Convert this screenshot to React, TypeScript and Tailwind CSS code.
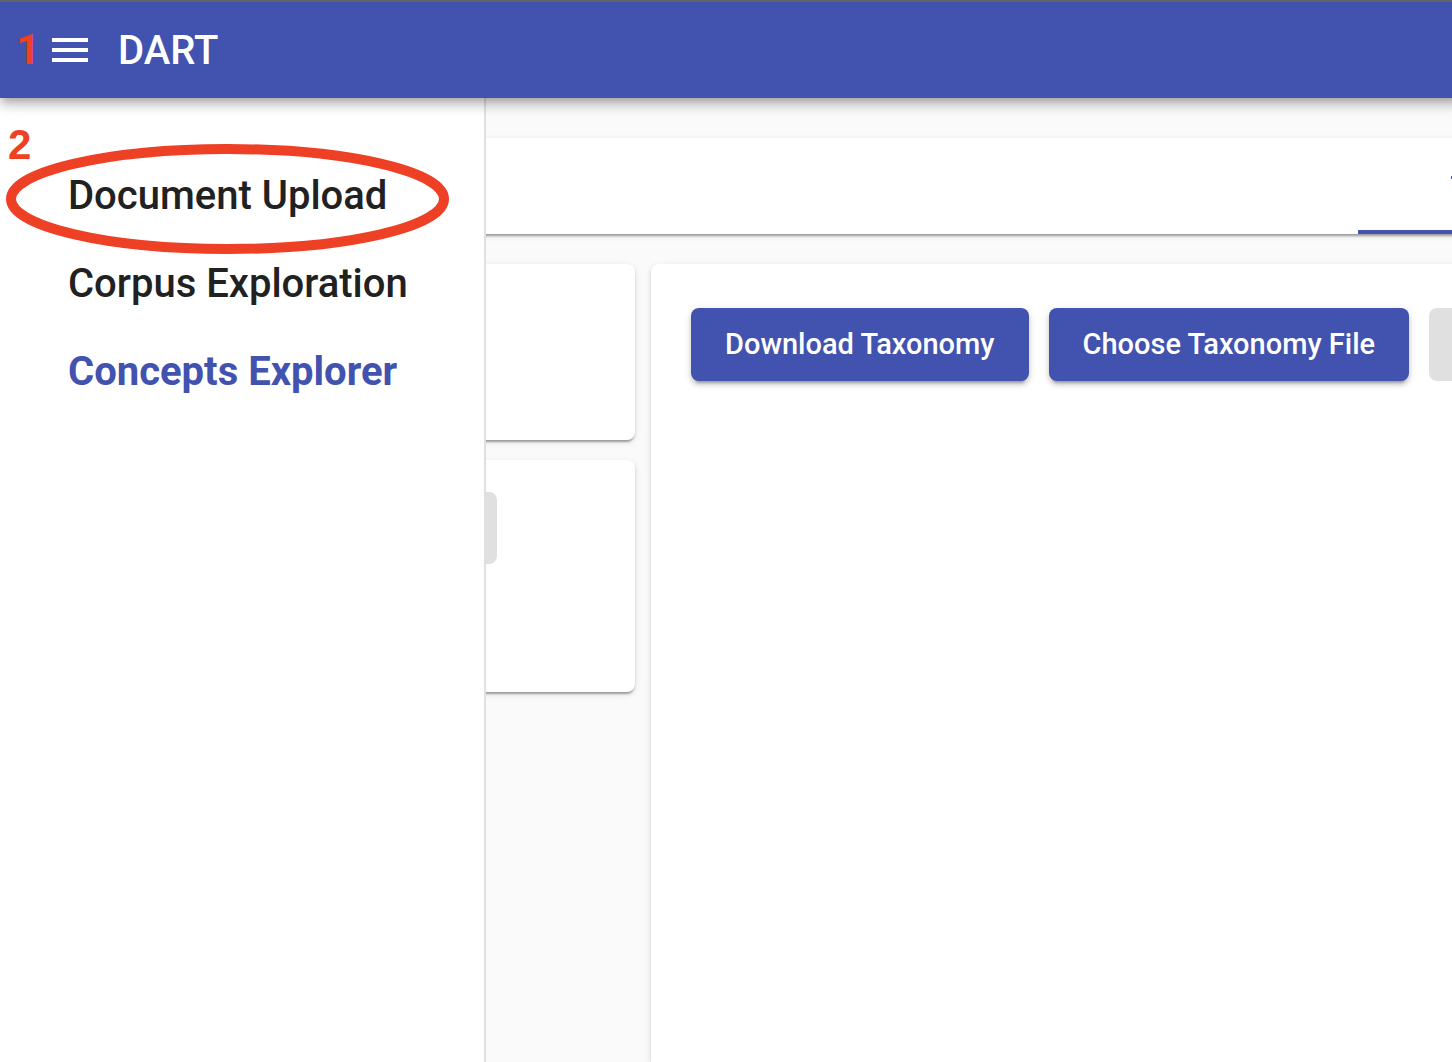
import React from "react";

const paper =
  "bg-white shadow-[0_4px_2px_-2px_rgba(0,0,0,0.2),0_2px_2px_0_rgba(0,0,0,0.14),0_2px_6px_0_rgba(0,0,0,0.12)]";

const containedButton =
  "h-[73px] shrink-0 cursor-pointer whitespace-nowrap rounded-lg bg-[#4152af] px-[34px] text-[29px] font-medium text-white shadow-[0_6px_2px_-4px_rgba(0,0,0,0.2),0_4px_4px_0_rgba(0,0,0,0.14),0_2px_10px_0_rgba(0,0,0,0.12)]";

function Header() {
  return (
    <header className="relative z-10 -mr-4 flex h-[98px] items-center border-t-2 border-[#636369] bg-[#4152af] pl-4 text-white shadow-[0_4px_8px_-2px_rgba(0,0,0,0.2),0_8px_10px_0_rgba(0,0,0,0.14),0_2px_20px_0_rgba(0,0,0,0.12)]">
      <span className="w-[30px] text-[42px] leading-none font-bold text-[#ed4025]">1</span>
      <button type="button" aria-label="Open menu" className="cursor-pointer">
        <svg viewBox="0 0 24 24" className="size-12" fill="currentColor" aria-hidden="true">
          <path d="M3 18h18v-2H3v2zm0-5h18v-2H3v2zm0-7v2h18V6H3z" />
        </svg>
      </button>
      <h1 className="ml-6 pt-0.5 text-[40px] leading-none font-medium">DART</h1>
    </header>
  );
}

function Sidebar() {
  return (
    <aside className="relative w-[486px] shrink-0 border-r-2 border-[#e0e0e0] bg-white pt-[54px]">
      <nav className="flex flex-col pl-[68px] text-[40px] font-medium text-[#212121]">
        <a href="#upload" className="flex h-[88px] items-center">Document Upload</a>
        <a href="#corpus" className="flex h-[88px] items-center">Corpus Exploration</a>
        <a href="#concepts" className="flex h-[88px] items-center font-bold text-[#4152af]">
          Concepts Explorer
        </a>
      </nav>
      <span className="absolute top-[26px] left-2 font-['Liberation_Sans',sans-serif] text-[42px] leading-none font-bold text-[#ed4025]">
        2
      </span>
      <svg
        viewBox="0 0 443 110"
        className="pointer-events-none absolute top-[46px] left-[6px] h-[110px] w-[443px]"
        fill="none"
        aria-hidden="true"
      >
        <ellipse cx="221.5" cy="55" rx="216.5" ry="50" stroke="#ed4025" strokeWidth="10" />
      </svg>
    </aside>
  );
}

export default function App() {
  return (
    <div className="flex min-h-screen flex-col overflow-hidden bg-[#fafafa] font-[Roboto,sans-serif]">
      <Header />
      <div className="flex flex-1">
        <Sidebar />
        <main className="flex min-w-0 flex-1 flex-col gap-[30px] overflow-hidden pt-10">
          <div className={`-mx-4 flex h-24 shrink-0 justify-end pr-4 ${paper}`} role="tablist">
            <button
              type="button"
              role="tab"
              aria-selected="true"
              aria-label="Taxonomy"
              className="flex w-[94px] items-start justify-end border-b-4 border-[#4152af] pt-[38px]"
            >
              <span className="h-[3px] w-px bg-[#4152af]" />
            </button>
          </div>
          <div className="-mx-4 flex flex-1 gap-4">
            <div className="flex w-[165px] shrink-0 flex-col gap-5">
              <section className={`h-44 rounded-lg ${paper}`} />
              <section className={`h-[232px] rounded-lg pt-8 pl-4 ${paper}`}>
                <button
                  type="button"
                  disabled
                  aria-label="Unavailable action"
                  className="block h-[72px] w-[11px] rounded-r-lg bg-[#e0e0e0]"
                />
              </section>
            </div>
            <section className={`min-w-0 flex-1 rounded-t-lg pt-11 pl-10 ${paper}`}>
              <div className="flex gap-5">
                <button type="button" className={containedButton}>Download Taxonomy</button>
                <button type="button" className={containedButton}>Choose Taxonomy File</button>
                <button
                  type="button"
                  disabled
                  aria-label="Upload taxonomy"
                  className="h-[73px] flex-1 rounded-l-lg bg-[#e0e0e0]"
                />
              </div>
            </section>
          </div>
        </main>
      </div>
    </div>
  );
}
